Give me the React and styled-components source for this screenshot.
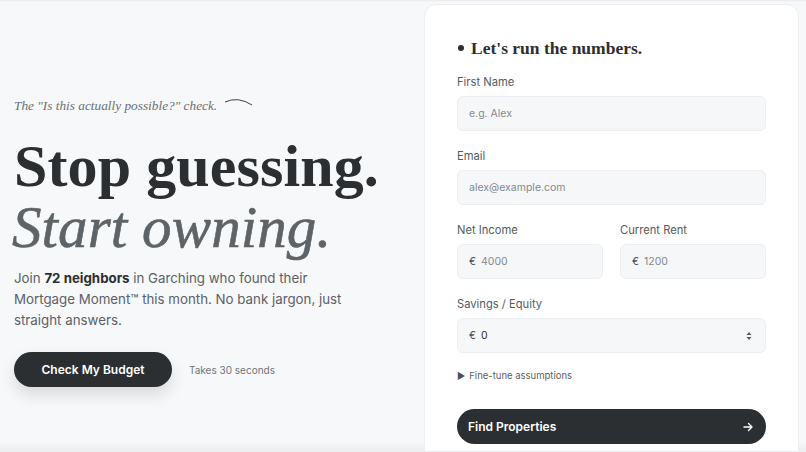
import React from "react";
import styled, { createGlobalStyle } from "styled-components";

const GlobalStyle = createGlobalStyle`
  html, body {
    margin: 0;
    padding: 0;
    background: #f7f8fa;
  }
  body {
    font-family: Inter, "Noto Sans", sans-serif;
    color: #2b2f31;
  }
`;

const Page = styled.div`
  position: relative;
  height: 452px;
  overflow: hidden;
  display: grid;
  grid-template-columns: 1fr 375px;
  padding: 4px 7px 0 14px;
  box-sizing: border-box;
  box-shadow: inset 0 2px 2px -1px rgba(0, 0, 0, 0.06),
    inset 0 -14px 12px -10px rgba(0, 0, 0, 0.06);
`;

const Hero = styled.section`
  display: flex;
  flex-direction: column;
  padding-top: 92px;
`;

const Tagline = styled.div`
  display: flex;
  align-items: center;
  gap: 7px;
  font-family: "Liberation Serif", serif;
  font-style: italic;
  font-size: 13.3px;
  color: #6b7073;
  height: 20px;
`;

const Headline = styled.h1`
  margin: 20px 0 0;
  font-family: "Liberation Serif", serif;
  font-weight: 700;
  font-size: 60px;
  line-height: 61px;
  letter-spacing: 0.1px;
  color: #2b2f31;
`;

const Accent = styled.span`
  display: block;
  font-style: italic;
  font-weight: 400;
  font-size: 59px;
  color: #5d6366;
  margin-left: -2px;
  -webkit-text-stroke: 0.6px #5d6366;
`;

const Lead = styled.p`
  margin: 10px 0 0;
  width: 345px;
  font-size: 13.3px;
  line-height: 21px;
  color: #5b6164;

  strong {
    color: #2b2f31;
    font-weight: 700;
  }
`;

const CtaRow = styled.div`
  display: flex;
  align-items: center;
  gap: 17px;
  margin-top: 21px;
`;

const PillButton = styled.button`
  display: flex;
  align-items: center;
  justify-content: ${(p) => (p.$wide ? "space-between" : "center")};
  height: 35px;
  width: ${(p) => (p.$wide ? "100%" : "158px")};
  padding: ${(p) => (p.$wide ? "0 12px 0 11px" : "0")};
  border: none;
  border-radius: 999px;
  background: #2b2f31;
  color: #fff;
  font-family: Inter, sans-serif;
  font-size: 12px;
  font-weight: 600;
  box-sizing: border-box;
  box-shadow: ${(p) => (p.$wide ? "none" : "0 8px 16px rgba(0, 0, 0, 0.12)")};
`;

const Hint = styled.span`
  font-size: 10px;
  color: #6f7477;
`;

const Card = styled.section`
  background: #fff;
  border: 1px solid #eceef1;
  border-radius: 12px 12px 0 0;
  padding: 29px 32px 0;
  display: flex;
  flex-direction: column;
  gap: 17px;
`;

const CardTitle = styled.h2`
  display: flex;
  align-items: center;
  gap: 7px;
  margin: 0 0 -5px;
  font-family: "Liberation Serif", serif;
  font-weight: 700;
  font-size: 17.5px;
  line-height: 28px;
  color: #2b2f31;

  &::before {
    content: "";
    width: 6px;
    height: 6px;
    border-radius: 50%;
    background: #2b2f31;
    margin-left: 1px;
  }
`;

const Field = styled.label`
  display: flex;
  flex-direction: column;
  gap: 6px;
  min-width: 0;
`;

const Label = styled.span`
  font-size: 11.2px;
  line-height: 16px;
  color: #555b5e;
`;

const Box = styled.div`
  display: flex;
  align-items: center;
  gap: 5px;
  height: 35px;
  padding: 0 11px;
  box-sizing: border-box;
  background: #f6f7f9;
  border: 1px solid #eceef1;
  border-radius: 6px;
`;

const Prefix = styled.span`
  font-size: 10.5px;
  color: #4a4f52;
`;

const Input = styled.input`
  flex: 1;
  width: 100%;
  min-width: 0;
  border: none;
  outline: none;
  background: transparent;
  padding: 0;
  font-family: Inter, sans-serif;
  font-size: 10.5px;
  color: #2b2f31;

  &::placeholder {
    color: #83898c;
  }
`;

const Pair = styled.div`
  display: grid;
  grid-template-columns: 1fr 1fr;
  gap: 17px;
`;

const Spinner = styled.svg`
  width: 8px;
  height: 12px;
  margin-right: 1px;
`;

const Summary = styled.div`
  display: flex;
  align-items: center;
  gap: 4px;
  height: 12px;
  margin: -1px 0 11px;
  font-size: 9.5px;
  color: #5b6164;
`;

const Caret = styled.span`
  font-size: 9px;
  color: #4a4f52;
`;

const Swoosh = () => (
  <svg width="30" height="12" viewBox="0 0 30 12" style={{ marginTop: -7 }}>
    <path d="M1 5 Q 14 -1 28 8" fill="none" stroke="#3b3f42" strokeWidth="1" />
  </svg>
);

export default function App() {
  return (
    <>
      <GlobalStyle />
      <Page>
        <Hero>
          <Tagline>
            The "Is this actually possible?" check.
            <Swoosh />
          </Tagline>
          <Headline>
            Stop guessing.
            <Accent>Start owning.</Accent>
          </Headline>
          <Lead>
            Join <strong>72 neighbors</strong> in Garching who found their
            Mortgage Moment™ this month. No bank jargon, just straight answers.
          </Lead>
          <CtaRow>
            <PillButton>Check My Budget</PillButton>
            <Hint>Takes 30 seconds</Hint>
          </CtaRow>
        </Hero>

        <Card>
          <CardTitle>Let's run the numbers.</CardTitle>
          <Field>
            <Label>First Name</Label>
            <Box>
              <Input placeholder="e.g. Alex" />
            </Box>
          </Field>
          <Field>
            <Label>Email</Label>
            <Box>
              <Input placeholder="alex@example.com" />
            </Box>
          </Field>
          <Pair>
            <Field>
              <Label>Net Income</Label>
              <Box>
                <Prefix>€</Prefix>
                <Input placeholder="4000" />
              </Box>
            </Field>
            <Field>
              <Label>Current Rent</Label>
              <Box>
                <Prefix>€</Prefix>
                <Input placeholder="1200" />
              </Box>
            </Field>
          </Pair>
          <Field>
            <Label>Savings / Equity</Label>
            <Box>
              <Prefix>€</Prefix>
              <Input defaultValue="0" />
              <Spinner viewBox="0 0 8 12">
                <path d="M4 2 L6.5 5 H1.5 Z" fill="#55595c" />
                <path d="M4 10 L6.5 7 H1.5 Z" fill="#55595c" />
              </Spinner>
            </Box>
          </Field>
          <Summary>
            <Caret>▶</Caret>
            Fine-tune assumptions
          </Summary>
          <PillButton $wide>
            Find Properties
            <svg width="12" height="12" viewBox="0 0 12 12">
              <path
                d="M2 6 H10 M6.5 2.5 L10 6 L6.5 9.5"
                fill="none"
                stroke="#fff"
                strokeWidth="1.4"
                strokeLinecap="round"
                strokeLinejoin="round"
              />
            </svg>
          </PillButton>
        </Card>
      </Page>
    </>
  );
}
